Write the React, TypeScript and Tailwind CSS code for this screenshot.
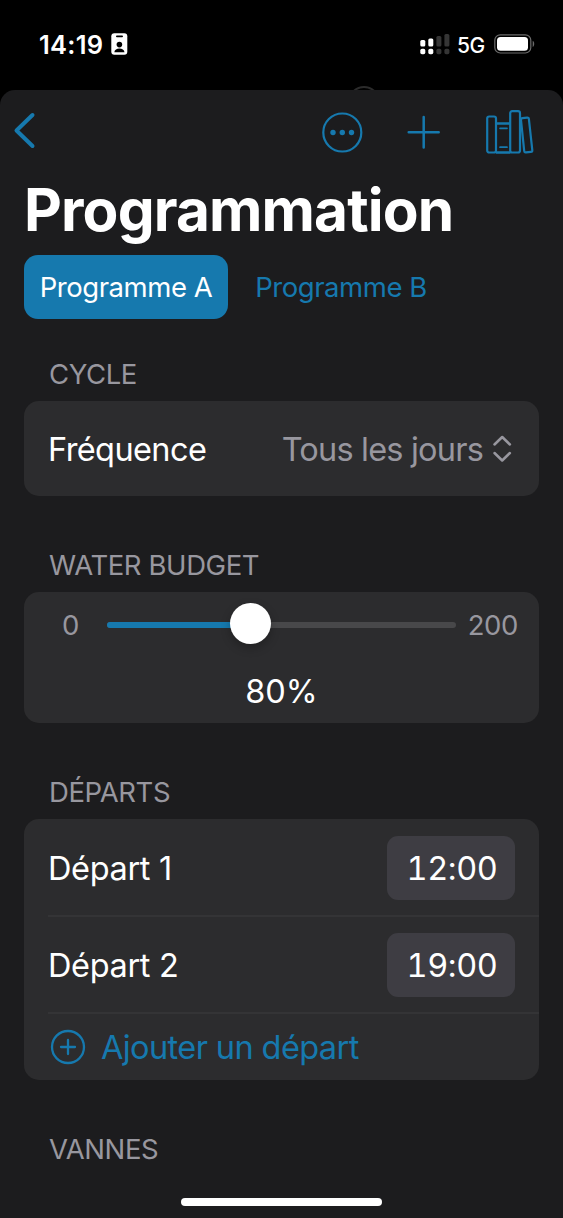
import { useState } from "react";

const departures = [
  { id: 1, label: "Départ 1", time: "12:00" },
  { id: 2, label: "Départ 2", time: "19:00" },
];

const StatusBar = () => (
  <div className="relative flex h-[90px] shrink-0 items-start justify-between overflow-hidden pl-[39px] pr-[27px] pt-[30px] text-white">
    <div className="flex h-7 items-center gap-[7px]">
      <span className="w-[65px] whitespace-nowrap pt-[2px] text-[25.500px] font-semibold leading-7 tracking-[0.25px]">14:19</span>
      <svg width="17" height="22" viewBox="0 0 17 22" className="shrink-0">
        <rect x="0.3" y="0.3" width="16" height="21.4" rx="3" fill="#fff" />
        <rect x="5" y="2.4" width="7" height="1.8" rx="0.9" fill="#000" />
        <circle cx="8.4" cy="11.6" r="2.8" fill="#000" />
        <path d="M3.3 19.2c.4-2.6 2.4-3.8 5.1-3.8s4.700 1.200 5.100 3.800z" fill="#000" />
      </svg>
    </div>
    <div className="flex h-7 items-center">
      <svg width="30" height="22" viewBox="0 0 30 22" className="mr-[7px] mt-px">
        <g fill="#fff">
          <rect x="0.300" y="6" width="5" height="6.500" rx="1.500" />
          <rect x="8.300" y="4.500" width="5" height="8" rx="1.500" />
          <rect x="0.300" y="14.700" width="5" height="5.500" rx="1.700" />
          <rect x="8.300" y="14.700" width="5" height="5.500" rx="1.700" />
        </g>
        <g fill="#353535">
          <rect x="16.400" y="2" width="5" height="10.500" rx="1.500" />
          <rect x="24.400" y="0" width="5" height="12.500" rx="1.500" />
          <rect x="16.400" y="14.700" width="5" height="5.500" rx="1.700" />
          <rect x="24.400" y="14.700" width="5" height="5.500" rx="1.700" />
        </g>
      </svg>
      <span className="w-[37px] pt-[3px] text-[21px] font-medium leading-7 tracking-[-0.5px]">5G</span>
      <svg width="42" height="20" viewBox="0 0 42 20">
        <rect x="0.800" y="0.800" width="36" height="18.200" rx="5.500" fill="none" stroke="#6b6b6b" strokeWidth="1.200" />
        <rect x="3" y="3" width="31" height="13.800" rx="3.500" fill="#fff" />
        <path d="M38.700 6.800c2 .9 2 5.300 0 6.200z" fill="#6b6b6b" />
      </svg>
    </div>
    {/* Top of the page lying behind the sheet */}
    <div className="absolute left-[348px] top-[86px] size-8 rounded-full border-2 border-[#2b2b2b]" />
  </div>
);

const NavBar = () => (
  <div className="flex h-[84px] items-center pl-[13px] pr-[28px] text-[#1679ae]">
    <button aria-label="Retour">
      <svg width="24" height="38" viewBox="0 0 24 38" fill="none" stroke="currentColor" strokeWidth="4" strokeLinecap="round" strokeLinejoin="round" className="mb-1">
        <path d="M19.500 4 3.500 19.500l16 15.500" />
      </svg>
    </button>
    <button aria-label="Options" className="ml-auto">
      <svg width="42" height="42" viewBox="0 0 42 42" fill="none" stroke="currentColor" strokeWidth="2.200">
        <circle cx="21.300" cy="21.500" r="19" />
        <g fill="currentColor" stroke="none">
          <circle cx="12" cy="21.500" r="2.700" />
          <circle cx="21.300" cy="21.500" r="2.700" />
          <circle cx="30.500" cy="21.500" r="2.700" />
        </g>
      </svg>
    </button>
    <button aria-label="Ajouter" className="ml-[43.500px]">
      <svg width="34" height="34" viewBox="0 0 34 34" fill="none" stroke="currentColor" strokeWidth="2.500" strokeLinecap="round">
        <path d="M16.700 2v30.500M1.700 17.300h30" />
      </svg>
    </button>
    <button aria-label="Bibliothèque" className="ml-[44.500px]">
      <svg width="50" height="46" viewBox="0 0 50 46" fill="none" stroke="currentColor" strokeWidth="2.200" strokeLinejoin="round">
        <rect x="2.200" y="7.500" width="8.800" height="36" rx="2" />
        <path d="M11 14.500h14.400M11 43.500h14.400" strokeWidth="2.500" />
        <path d="M15 19.300h7M15 38.200h7" strokeWidth="1.700" strokeLinecap="round" />
        <rect x="25.200" y="2.200" width="9.800" height="41.300" rx="2" />
        <path d="M36 11c-.1-1.100.5-1.800 1.500-1.900l4.600-.5c1-.1 1.700.5 1.800 1.500l3.400 31c.1 1-.5 1.700-1.500 1.800l-4.800.5c-1 .1-1.700-.5-1.800-1.500z" />
      </svg>
    </button>
  </div>
);

const SectionTitle = ({ children }: { children: string }) => (
  <h2 className="h-[34px] pl-[25px] text-[27.500px] leading-[34px] tracking-[-0.400px] text-[#98979f]">{children}</h2>
);

const App = () => {
  const [program, setProgram] = useState("A");
  const budget = 80;

  return (
    <div className="flex h-[1218px] w-[563px] flex-col overflow-hidden bg-black font-['Inter',sans-serif]">
      <StatusBar />
      <main className="flex flex-1 flex-col rounded-t-[15px] bg-[#1c1c1e]">
        <NavBar />

        <div className="px-6">
          <h1 className="h-[74px] whitespace-nowrap text-[58.500px] font-bold leading-[72px] tracking-[-0.850px] text-white">Programmation</h1>
          <div className="mt-[7px] flex h-16">
            {["A", "B"].map((name) => (
              <button
                key={name}
                onClick={() => setProgram(name)}
                className={
                  "mr-[11px] w-[204px] whitespace-nowrap rounded-[14px] pt-[2px] text-[27.500px] tracking-[-0.450px] " +
                  (program === name ? "bg-[#1679ae] text-white" : "text-[#1679ae]")
                }
              >
                Programme {name}
              </button>
            ))}
          </div>

          <section className="mt-[38px]">
            <SectionTitle>CYCLE</SectionTitle>
            <div className="mt-[10px] flex h-[95px] items-center rounded-[15px] bg-[#2c2c2e] pl-[24px] pr-[27px] text-[32.500px]">
              <span className="pt-[3px] tracking-[-0.600px] text-white">Fréquence</span>
              <span className="ml-auto pt-[3px] tracking-[-0.800px] text-[#98979f]">Tous les jours</span>
              <svg width="20" height="28" viewBox="0 0 20 28" fill="none" stroke="#98979f" strokeWidth="2.500" strokeLinecap="round" strokeLinejoin="round" className="ml-[9px]">
                <path d="m2.500 9.500 7.700-7.500 7.700 7.500M2.500 18l7.700 7.500 7.700-7.500" />
              </svg>
            </div>
          </section>

          <section className="mt-[52px]">
            <SectionTitle>WATER BUDGET</SectionTitle>
            <div className="mt-[10px] h-[131px] rounded-[15px] bg-[#2c2c2e] pt-[12px]">
              <div className="flex h-[42px] items-center pl-[38px] pr-[21px] text-[27.500px] tracking-[-0.400px] text-[#98979f]">
                <span className="w-[45px] pt-[2px]">0</span>
                <div className="relative h-[6px] w-[349px] rounded-full bg-[#48484a]">
                  <div className="h-full rounded-full bg-[#1679ae]" style={{ width: `${budget / 2}%` }} />
                  <div className="absolute left-[122.500px] top-[-19px] size-[41px] rounded-full bg-white shadow-[0_4px_10px_rgba(0,0,0,0.25)]" />
                </div>
                <span className="ml-auto pt-[2px]">200</span>
              </div>
              <p className="mt-[25px] text-center text-[32.500px] leading-[42px] text-white">{budget}%</p>
            </div>
          </section>

          <section className="mt-[52px]">
            <SectionTitle>DÉPARTS</SectionTitle>
            <div className="mt-[10px] h-[261px] rounded-[15px] bg-[#2c2c2e] pl-[24px] text-[32.500px]">
              {departures.map((item) => (
                <div key={item.id} className="flex h-[97.500px] items-center justify-between border-b-2 border-[#343436] pr-[24px] pt-[2px] text-white">
                  <span className="pt-[3px] tracking-[-0.350px]">{item.label}</span>
                  <span className="flex h-16 w-[128px] items-center justify-center rounded-[11px] bg-[#3e3d43] pl-[2px] pt-[3px] tracking-[-0.400px] tabular-nums">{item.time}</span>
                </div>
              ))}
              <button className="flex h-[65px] items-center text-[#1679ae]">
                <svg width="36" height="36" viewBox="0 0 36 36" fill="none" stroke="currentColor" strokeWidth="2.300" strokeLinecap="round" className="ml-[2px] mr-[15px]">
                  <circle cx="18" cy="18" r="16" />
                  <path d="M18 11v14M11 18h14" />
                </svg>
                <span className="pt-[3px] tracking-[-0.600px]">Ajouter un départ</span>
              </button>
            </div>
          </section>

          <section className="mt-[52px]">
            <SectionTitle>VANNES</SectionTitle>
          </section>
        </div>

        {/* Home indicator */}
        <div className="mb-3 mt-auto h-2 w-[201px] self-center rounded-full bg-white" />
      </main>
    </div>
  );
};

export default App;
